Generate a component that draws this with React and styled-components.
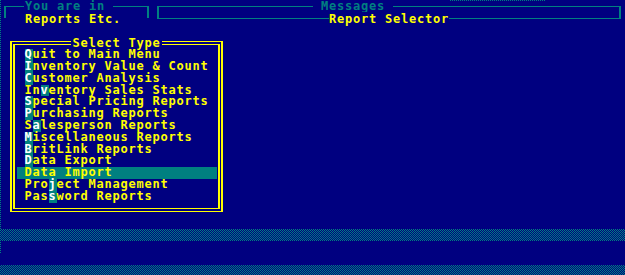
import styled, { createGlobalStyle } from 'styled-components';

const NAVY = '#000080';
const TEAL = '#008080';
const YELLOW = '#ffff00';

const GlobalStyle = createGlobalStyle`
  html, body {
    margin: 0;
    padding: 0;
    background: ${NAVY};
  }
`;

const menu = [
  { label: 'Quit to Main Menu', key: 0 },
  { label: 'Inventory Value & Count', key: 0 },
  { label: 'Customer Analysis', key: 0 },
  { label: 'Inventory Sales Stats', key: 2 },
  { label: 'Special Pricing Reports', key: 0 },
  { label: 'Purchasing Reports', key: 0 },
  { label: 'Salesperson Reports', key: 1 },
  { label: 'Miscellaneous Reports', key: 0 },
  { label: 'BritLink Reports', key: 0 },
  { label: 'Data Export', key: 0 },
  { label: 'Data Import', key: -1, selected: true },
  { label: 'Project Management', key: 3 },
  { label: 'Password Reports', key: 3 },
];

export default function App() {
  return (
    <>
      <GlobalStyle />
      <Screen>
        <LeftEdge />
        <TopDots />
        <Header>
          <Box $w={145}>
            <Caption $at={18} $pad={8}>You are in</Caption>
            <BoxText $indent={19}>Reports Etc.</BoxText>
          </Box>
          <Box $w={464} $closed>
            <Caption $at={154} $pad={8} style={{ paddingLeft: 8 }}>Messages</Caption>
            <BoxText $center><Cut>Report Selector</Cut></BoxText>
          </Box>
        </Header>

        <Frame>
          <Title>Select Type</Title>
          <FrameInner>
            <Menu>
              {menu.map((m) => (
                <Item key={m.label} $selected={m.selected}>
                  {m.key < 0 ? (
                    m.label
                  ) : (
                    <>
                      {m.label.slice(0, m.key)}
                      <Hotkey>{m.label[m.key]}</Hotkey>
                      {m.label.slice(m.key + 1)}
                    </>
                  )}
                </Item>
              ))}
            </Menu>
          </FrameInner>
        </Frame>

        <Dither $gap={17} />
        <Dither $gap={24} />
      </Screen>
    </>
  );
}

const Screen = styled.div`
  position: relative;
  width: 625px;
  height: 275px;
  overflow: hidden;
  background: ${NAVY};
  color: ${YELLOW};
  font-family: "DejaVu Sans Mono", "Liberation Mono", monospace;
  font-weight: bold;
  font-size: 12px;
  line-height: 12px;
  letter-spacing: 0.78px;
`;

const LeftEdge = styled.div`
  position: absolute;
  left: 0;
  top: 0;
  width: 1px;
  height: 253px;
  background: repeating-linear-gradient(to bottom, ${TEAL} 0 1px, transparent 1px 2px);
`;

const TopDots = styled.div`
  position: absolute;
  left: 450px;
  top: 0;
  width: 95px;
  height: 1px;
  background: repeating-linear-gradient(to right, ${TEAL} 0 1px, transparent 1px 2px);
`;

const Header = styled.div`
  display: flex;
  align-items: flex-start;
  gap: 8px;
  height: 19px;
  padding-left: 4px;
`;

const Box = styled.fieldset`
  margin: 0;
  padding: 0;
  min-width: 0;
  width: ${(p) => p.$w}px;
  box-sizing: border-box;
  border-style: solid;
  border-color: ${TEAL};
  border-width: 1px 2px ${(p) => (p.$closed ? '1px' : '0')} 2px;
`;

const Caption = styled.legend`
  margin-left: ${(p) => p.$at}px;
  padding: 0 ${(p) => p.$pad}px 0 1px;
  line-height: 13px;
  color: ${TEAL};
`;

const BoxText = styled.div`
  height: 5px;
  padding-left: ${(p) => p.$indent || 0}px;
  text-align: ${(p) => (p.$center ? 'center' : 'left')};
  line-height: 12px;
  white-space: pre;
`;

const Cut = styled.span`
  background: ${NAVY};
`;

const Frame = styled.div`
  position: relative;
  width: 213px;
  box-sizing: border-box;
  margin: 22px 0 0 10px;
  padding: 2px 1px;
  border: solid ${YELLOW};
  border-width: 1px 2px;
`;

const Title = styled.div`
  position: absolute;
  top: -5px;
  left: 0;
  right: 0;
  width: max-content;
  margin: 0 auto;
  padding: 0 1px;
  line-height: 12px;
  background: ${NAVY};
`;

const FrameInner = styled.div`
  border: solid ${YELLOW};
  border-width: 1px 2px;
  padding: 4.3px 1.5px 5.6px;
`;

const Menu = styled.ul`
  list-style: none;
  margin: 0;
  padding: 0;
`;

const Item = styled.li`
  height: 11.8px;
  line-height: 11.8px;
  padding-left: 8px;
  white-space: pre;
  background: ${(p) => (p.$selected ? TEAL : 'transparent')};
`;

const Hotkey = styled.span`
  display: inline-block;
  background: ${TEAL};
  color: #ffffff;
`;

const Dither = styled.div`
  height: 12px;
  margin-top: ${(p) => p.$gap}px;
  background: repeating-conic-gradient(${TEAL} 0 25%, ${NAVY} 0 50%) 0 0 / 2px 2px;
`;
